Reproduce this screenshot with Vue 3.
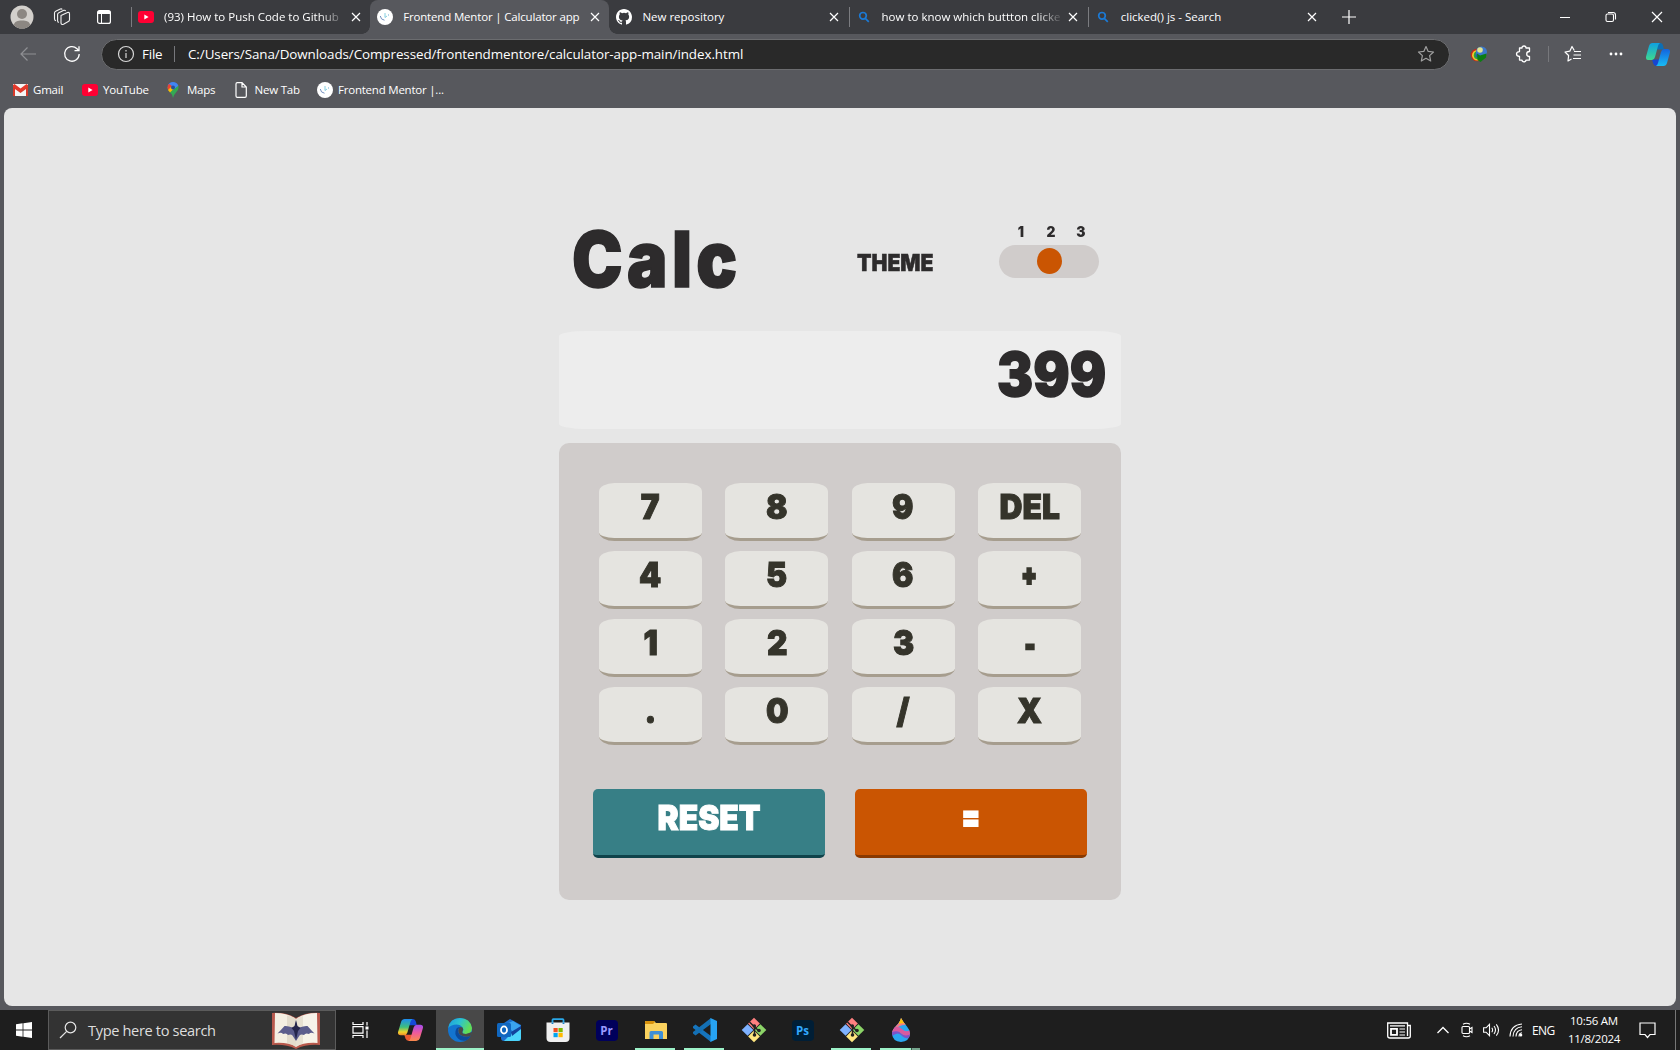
<script setup>
const tabs = [
  { icon: 'yt', title: '(93) How to Push Code to Github', fade: true },
  { icon: 'fm', title: 'Frontend Mentor | Calculator app', active: true },
  { icon: 'gh', title: 'New repository' },
  { icon: 'search', title: 'how to know which buttton clicke', fade: true },
  { icon: 'search', title: 'clicked() js - Search' },
]
const keys = ['7', '8', '9', 'DEL', '4', '5', '6', '+', '1', '2', '3', '-', '.', '0', '/', 'X']
</script>

<template>
  <div class="screen">
    <header class="tabbar">
      <div class="tabtools">
        <svg class="avatar" width="24" height="24" viewBox="0 0 24 24">
          <defs><clipPath id="av"><circle cx="12" cy="12" r="11.5" /></clipPath></defs>
          <g clip-path="url(#av)">
            <rect width="24" height="24" fill="#d3d0cc" />
            <circle cx="12" cy="9" r="5" fill="#8c8782" />
            <path d="M3.5 21c1-5 4-5.500 8.500-5.500s7.500.5 8.500 5.500v4h-17z" fill="#8c8782" />
          </g>
        </svg>
        <svg class="stack" width="18" height="18" viewBox="0 0 18 18" fill="none" stroke="#f2f2f2" stroke-width="1.1" stroke-linejoin="round">
          <path d="M8 7.500 14.500 4.500q1.800-.5 2 1.200v6q0 1.300-1.200 1.900l-4.800 2.600q-2.300.9-2.500-1.200z" />
          <path d="M5.800 14.500q-1.200-.5-1.200-1.800V6.600q0-1.300 1.200-1.900l5-2.400q1.400-.4 1.800.8" />
          <path d="M3 12.800q-1.500-.4-1.500-2V5.100q0-1.200 1.200-1.800L7.300 1q1.400-.5 1.900.6" />
        </svg>
        <svg class="vtabs" width="16" height="16" viewBox="0 0 16 16">
          <rect x="1.600" y="1.600" width="12.800" height="12.800" rx="2" fill="none" stroke="#fff" stroke-width="1.200" />
          <path d="M1.500 5V3.500q0-2 2-2h9q2 0 2 2V5z" fill="#fff" />
          <path d="M5.500 4v10" stroke="#fff" />
        </svg>
      </div>
      <div v-for="(t, i) in tabs" :key="i" class="tab" :class="{ active: t.active, bare: t.active || i === 2 }">
        <span class="ticon">
          <svg v-if="t.icon === 'yt'" width="16" height="12" viewBox="0 0 16 12"><rect width="16" height="12" rx="3" fill="#ff0033" /><path d="M6.300 3.500v5L10.600 6z" fill="#fff" /></svg>
          <svg v-else-if="t.icon === 'fm'" width="16" height="16" viewBox="0 0 16 16"><circle cx="8" cy="8" r="8" fill="#fff" /><path d="M3.300 7q.4 3.800 4.200 4.200" fill="none" stroke="#7590c0" /><path d="M8 4v4.500l2-1.500" fill="none" stroke="#86cfe0" /><path d="M11.500 5v2" stroke="#b5d6e8" /></svg>
          <svg v-else-if="t.icon === 'gh'" width="16" height="16" viewBox="0 0 16 16"><path fill="#fff" d="M8 0C3.580 0 0 3.580 0 8c0 3.540 2.290 6.530 5.470 7.590.4.070.55-.17.55-.38 0-.19-.01-.82-.01-1.490-2.010.37-2.530-.49-2.690-.94-.09-.23-.48-.94-.82-1.130-.28-.15-.68-.52-.01-.53.63-.01 1.080.58 1.230.82.72 1.210 1.870.87 2.330.66.07-.52.28-.87.51-1.070-1.780-.2-3.640-.89-3.640-3.950 0-.87.31-1.590.82-2.150-.08-.2-.36-1.020.08-2.120 0 0 .67-.21 2.200.82a7.600 7.600 0 0 1 4 0c1.530-1.040 2.200-.82 2.200-.82.44 1.100.16 1.920.08 2.120.51.56.82 1.270.82 2.150 0 3.070-1.870 3.750-3.650 3.950.29.25.54.73.54 1.480 0 1.070-.01 1.930-.01 2.200 0 .21.15.46.55.38A8 8 0 0 0 16 8c0-4.420-3.580-8-8-8z" /></svg>
          <svg v-else width="12" height="12" viewBox="0 0 12 12" fill="none" stroke="#1b7ad6" stroke-width="1.700"><circle cx="5" cy="4.800" r="3.300" /><path d="M7.300 7.300 10.800 10.800" /></svg>
        </span>
        <span class="ttext" :class="{ fade: t.fade }">{{ t.title }}</span>
        <svg class="x" width="10" height="10" viewBox="0 0 10 10" stroke="#fff" stroke-width="1.200"><path d="M1 1l8 8M9 1 1 9" /></svg>
      </div>
      <svg class="plus" width="14" height="14" viewBox="0 0 14 14" stroke="#fff" stroke-width="1.200"><path d="M7 0v14M0 7h14" /></svg>
      <div class="winctl">
        <svg width="46" height="34" viewBox="0 0 46 34"><path d="M18 17.500h10" stroke="#fff" /></svg>
        <svg width="46" height="34" viewBox="0 0 46 34" fill="none" stroke="#fff" stroke-width="1.100"><rect x="18" y="14" width="7.500" height="7.500" rx="1.500" /><path d="M20 12.500h5q2.500 0 2.500 2.500v4.500" /></svg>
        <svg width="46" height="34" viewBox="0 0 46 34" stroke="#fff" stroke-width="1.200"><path d="M18 12l10 10M28 12 18 22" /></svg>
      </div>
    </header>

    <div class="toolbar">
      <svg class="back" width="16" height="14" viewBox="0 0 16 14" fill="none" stroke="#8f9094" stroke-width="1.200"><path d="M16 7H1M7.500.5 1 7l6.500 6.500" /></svg>
      <svg class="reload" width="18" height="18" viewBox="0 0 18 18" fill="none" stroke="#fff" stroke-width="1.300"><path d="M16.200 9A7.300 7.300 0 1 1 14 3.700L15.800 5.500" /><path d="M16 1.200v4.500h-4.500" /></svg>
      <div class="address">
        <svg class="info" width="18" height="18" viewBox="0 0 18 18" fill="none" stroke="#d8d8d8" stroke-width="1.200"><circle cx="9" cy="9" r="7.500" /><path d="M9 8v5M9 5v1.500" /></svg>
        <span class="file">File</span>
        <i class="vline"></i>
        <span class="url">C:/Users/Sana/Downloads/Compressed/frontendmentore/calculator-app-main/index.html</span>
        <svg class="star" width="18" height="18" viewBox="0 0 18 18" fill="none" stroke="#a0a0a0" stroke-width="1.200" stroke-linejoin="round"><path d="M9 1.500l2.200 4.900 5.300.6-3.900 3.600 1.100 5.400L9 13.300 4.300 16l1.100-5.400L1.500 7l5.300-.6z" /></svg>
      </div>
      <svg class="idm" width="18" height="16" viewBox="0 0 18 16">
        <circle cx="7" cy="9" r="6.300" fill="#c42b18" /><circle cx="7.300" cy="9.200" r="5.300" fill="#f0c92c" /><circle cx="7.800" cy="9.300" r="4" fill="#2fa043" /><circle cx="8.500" cy="9" r="2.800" fill="#2456b8" />
        <circle cx="11.500" cy="6" r="5.500" fill="#3d78ca" /><circle cx="10" cy="4" r="2.800" fill="#e0e391" /><path d="M7 7.500l3 2 6.500-2-.5 4-5.500 4.500-3-2z" fill="#0c7d12" />
      </svg>
      <svg class="puzzle" width="16" height="18" viewBox="0 0 16 18" fill="none" stroke="#fff" stroke-width="1.300" stroke-linejoin="round"><path d="M4.500 3H7q0-2 2-2t2 2h3.500v3.500q-2.800 0-2.800 2.500t2.800 2.500v3.600H11q0 1.800-2 1.800t-2-1.800H4.500v-3.600Q1.500 11.200 1.500 9t3-2.400z" /></svg>
      <i class="vline t"></i>
      <svg class="favs" width="18" height="18" viewBox="0 0 18 18" fill="none" stroke="#fff" stroke-width="1.200" stroke-linejoin="round"><path d="M10.300 5.500 8 1.500 5.800 6.200 1 7l3.600 3.500L4 16l3.500-2" /><path d="M10 6.500h7M9.500 10h7.500M9 13.500h8" /></svg>
      <svg class="dots" width="14" height="4" viewBox="0 0 14 4" fill="#fff"><circle cx="2" cy="2" r="1.400" /><circle cx="7" cy="2" r="1.400" /><circle cx="12" cy="2" r="1.400" /></svg>
      <svg class="copilot" width="24" height="23" viewBox="0 0 24 23">
        <defs>
          <linearGradient id="c1" x1="0" y1="0" x2="0" y2="1"><stop offset="0" stop-color="#0fa0e0" /><stop offset="1" stop-color="#3fd98f" /></linearGradient>
          <linearGradient id="c2" x1="0" y1="1" x2="0" y2="0"><stop offset="0" stop-color="#18bcf5" /><stop offset="1" stop-color="#1463dd" /></linearGradient>
        </defs>
        <path d="M6 0h8.500q2 0 2.700 3l.8 3.500h-8z" fill="#0d6fb4" /><path d="M6 16.500h8.500L12 23h-1.500q-2.500 0-3.300-2.500z" fill="#1746d0" />
        <path d="M6.500 0H14q-1.500 1-2 3L9 14q-.8 3-3 3H2.500Q-.8 17 .2 13L3 3q.9-3 3.500-3z" fill="url(#c1)" />
        <path d="M18 6h3.500q3.300 0 2.300 4L21 20q-.9 3-3.500 3H10q1.500-1 2-3l3-11q.8-3 3-3z" fill="url(#c2)" />
      </svg>
    </div>

    <div class="bookmarks">
      <span class="bm b1"><svg width="15" height="12" viewBox="0 0 15 12"><path d="M0 0h15v12H0z" fill="#f5f5f5" /><path d="M0 12V1.500l7.500 5.500L15 1.500V12h-2V5L7.500 9 2 5v7z" fill="#d93a2b" /><path d="M0 1l1.500-1 6 4.500L13.500 0 15 1v1.500L7.500 8 0 2.500z" fill="#e5392c" /></svg>Gmail</span>
      <span class="bm b2"><svg width="16" height="12" viewBox="0 0 16 12"><rect width="16" height="12" rx="3" fill="#ff0033" /><path d="M6.300 3.500v5L10.600 6z" fill="#fff" /></svg>YouTube</span>
      <span class="bm b3"><svg width="12" height="16" viewBox="0 0 12 16"><path d="M6 16Q5.500 12.500 3 10.200 0 7 .4 5L6 5l5.300-1.500Q12.500 7 9 10.500 6.600 13 6 16z" fill="#34a853" /><path d="M.7 4Q2 0 6 0t5.300 3.700L6 8z" fill="#4285f4" /><path d="M2 1.700 5.500 4.500 1.500 8.500Q-.8 5 2 1.700z" fill="#ea4335" /><path d="M1 8l3.500-3.500L6.500 7 3 10.600z" fill="#fbbc04" /><circle cx="6" cy="5.500" r="2" fill="#24539c" /></svg>Maps</span>
      <span class="bm b4"><svg width="12" height="16" viewBox="0 0 12 16" fill="none" stroke="#fff" stroke-width="1.200"><path d="M1 2q0-1.300 1.300-1.300H7L11.300 5v9q0 1.300-1.300 1.300H2.300Q1 15.300 1 14zM7 .7V5h4.300" /></svg>New Tab</span>
      <span class="bm b5"><svg width="16" height="16" viewBox="0 0 16 16"><circle cx="8" cy="8" r="8" fill="#fff" /><path d="M3.300 7q.4 3.800 4.200 4.200" fill="none" stroke="#7590c0" /><path d="M8 4v4.500l2-1.500" fill="none" stroke="#86cfe0" /><path d="M11.500 5v2" stroke="#b5d6e8" /></svg>Frontend Mentor |...</span>
    </div>

    <main class="page">
      <div class="calc">
        <div class="head">
          <h1>Calc</h1>
          <span class="theme">THEME</span>
          <div class="switch">
            <div class="nums"><span>1</span><span>2</span><span>3</span></div>
            <div class="track"><i></i></div>
          </div>
        </div>
        <div class="display"><span>399</span></div>
        <div class="pad">
          <div class="keys">
            <button v-for="k in keys" :key="k"><span :class="{ op: k === '+' || k === '-', minus: k === '-' }">{{ k }}</span></button>
          </div>
          <div class="big">
            <button class="reset"><span>RESET</span></button>
            <button class="equal"><span>=</span></button>
          </div>
        </div>
      </div>
    </main>

    <footer class="taskbar">
      <div class="start"><svg width="16" height="16" viewBox="0 0 16 16" fill="#fff"><path d="M0 2.200 6.600 1.300v6.300H0zM7.400 1.200 16 0v7.600H7.400zM0 8.400h6.600v6.300L0 13.800zM7.400 8.400H16V16l-8.600-1.200z" /></svg></div>
      <div class="searchbox">
        <svg class="mag" width="18" height="18" viewBox="0 0 18 18" fill="none" stroke="#e6e6e6" stroke-width="1.200"><circle cx="11.500" cy="6.500" r="5.300" /><path d="M7.700 10.300 1 17" /></svg>
        <span>Type here to search</span>
        <svg class="book" width="48" height="37" viewBox="0 0 48 37">
          <path d="M0 1q14-1 24 5Q34 0 48 1v32q-14-1-24 4Q14 32 0 33z" fill="#b8594c" />
          <path d="M3 1q13 0 21 6v28Q16 30 2.500 31z" fill="#f4efe2" /><path d="M45 1q-13 0-21 6v28q8-5 21.500-4z" fill="#f7f3e8" />
          <path d="M24 7v28q-4-3-9-4V3.500q6 1.300 9 3.500z" fill="#cfc6b2" opacity=".45" /><path d="M24 7v28q4-3 7-3.500V4q-5 1.500-7 3z" fill="#cfc6b2" opacity=".4" />
          <path d="M24 9l1.200 6 2.300.5q5-2 8-1.500 3 3.500 7 7.500-4-1.500-5.500.5-3.500-1.500-5 1-3-1-4.500.5L24 29l-3.500-5.500q-1.500-1.500-4.500-.5-1.500-2.500-5-1-1.500-2-5.500-.5 4-4 7-7.500 3-.5 8 1.500l2.300-.5z" fill="#5c5d8c" />
          <path d="M24 8l1.500 6 3 2-2.500 3-2 9-2-9-2.500-3 3-2z" fill="#25264b" />
        </svg>
      </div>
      <div class="cell first"><svg width="17" height="16" viewBox="0 0 17 16" fill="none" stroke="#fff" stroke-width="1.200"><path d="M1 0v2.500h10V0M1 16v-2.500h10V16M1 4.700h10v6.500H1zM15 0v3.500M15 8.500V16" /><path d="M13.500 4.500h3v3h-3z" fill="#fff" stroke="none" /></svg></div>
      <div class="cell">
        <svg width="25" height="22" viewBox="0 0 24 23" preserveAspectRatio="none">
          <defs>
            <linearGradient id="k1" x1="0" y1="0" x2="0" y2="1"><stop offset="0" stop-color="#1d8df0" /><stop offset=".5" stop-color="#3fc07c" /><stop offset=".8" stop-color="#f2d32c" /><stop offset="1" stop-color="#f08a2a" /></linearGradient>
            <linearGradient id="k2" x1="0" y1="1" x2="0" y2="0"><stop offset="0" stop-color="#f98a4b" /><stop offset=".5" stop-color="#ee5a9c" /><stop offset="1" stop-color="#a44cf0" /></linearGradient>
          </defs>
          <path d="M6 0h8.500q2 0 2.700 3l.8 3.500h-8z" fill="#1649d8" /><path d="M6 16.500h8.500L12 23h-1.500q-2.500 0-3.300-2.500z" fill="#ec5a30" />
          <path d="M6.500 0H14q-1.500 1-2 3L9 14q-.8 3-3 3H2.500Q-.8 17 .2 13L3 3q.9-3 3.500-3z" fill="url(#k1)" />
          <path d="M18 6h3.500q3.300 0 2.300 4L21 20q-.9 3-3.500 3H10q1.500-1 2-3l3-11q.8-3 3-3z" fill="url(#k2)" />
        </svg>
      </div>
      <div class="cell on full">
        <svg width="24" height="24" viewBox="0 0 24 24">
          <defs><linearGradient id="e1" x1="0" y1="0" x2="1" y2=".4"><stop offset="0" stop-color="#1c9ae0" /><stop offset=".5" stop-color="#2cc3d0" /><stop offset="1" stop-color="#63de54" /></linearGradient></defs>
          <circle cx="12" cy="12" r="12" fill="#1374cf" />
          <path d="M.2 10Q2 0 12 0t12 10q0 6-6.500 6-3.500 0-3-2.500 1.500-2 0-4Q12.500 6.500 8.500 6.500 3 6.500.2 10z" fill="url(#e1)" />
          <path d="M8.500 10.500q-3 5.500 1.500 10 3 3 8 1.900Q21 21 22.800 17.800q-5 2-9.300 0Q9.500 16 10.200 11.500 10.800 9.800 12.500 9 10 8.500 8.500 10.500z" fill="#0b4a9c" />
          <path d="M12.500 9q-2.200 1.200-2.200 4 .5 4.200 5 5.300 4 .9 7.500-.5.500-.2 1-1.200l.2-2.600-6 2q-4.500 0-3.500-2.500 1.500-2.300 0-4z" fill="#484848" />
        </svg>
      </div>
      <div class="cell">
        <svg width="24" height="22" viewBox="0 0 24 22"><path d="M4 6 13 0l11 6v13q0 3-3 3H7q-3 0-3-3z" fill="#1c6fce" /><path d="M9 5l7-3 8 5-8 6z" fill="#3ba3ee" /><path d="M24 8v11q0 3-3 3H7l7-7z" fill="#4cd4fa" /><path d="M14 13l10-6v3l-9 7z" fill="#12439c" /><rect y="4" width="14" height="14" rx="1.500" fill="#1067c0" /><ellipse cx="7" cy="11" rx="3" ry="3.600" fill="none" stroke="#fff" stroke-width="1.800" /></svg>
      </div>
      <div class="cell">
        <svg width="24" height="24" viewBox="0 0 24 24"><path d="M6.500 6V2q0-.8.8-.8h9.400q.8 0 .8.800v4" fill="none" stroke="#2aa8e8" stroke-width="1.800" /><path d="M.5 4.500h23V20q0 4-4 4h-15q-4 0-4-4z" fill="#f0f0f0" /><path d="M6.500 6V4.500M17.500 6V4.500" stroke="#1b7fc4" stroke-width="1.800" /><path d="M7.500 10h4.200v4.200H7.500z" fill="#f25022" /><path d="M12.500 10h4.200v4.200h-4.200z" fill="#7fba00" /><path d="M7.500 15h4.200v4.200H7.500z" fill="#00a4ef" /><path d="M12.500 15h4.200v4.200h-4.200z" fill="#ffb900" /></svg>
      </div>
      <div class="cell"><span class="adobe pr">Pr</span></div>
      <div class="cell run">
        <svg width="22" height="18" viewBox="0 0 22 18"><path d="M0 1q0-1 1-1h8l2 2h10q1 0 1 1v15H0z" fill="#fbd25e" /><path d="M0 3V1q0-1 1-1h8l1 1-2 2z" fill="#d8920c" /><path d="M4.500 18v-6.500q0-1.500 1.500-1.500h10.500q1.500 0 1.500 1.500V18h-4v-4.500H8.500V18z" fill="#3f8fd6" /></svg>
      </div>
      <div class="cell run">
        <svg width="24" height="24" viewBox="0 0 24 24"><path d="M0 8.500 2.500 6.500 18 18v6L0 10z" fill="#1675bd" /><path d="M0 15.500l2.500 2L18 6V0L0 14z" fill="#1470b5" /><path d="M17.500 0 24 3v18l-6.500 3z" fill="#27a3f2" /></svg>
      </div>
      <div v-for="n in 3" :key="n" class="cell" :class="{ run: n === 3 }">
        <svg v-if="n !== 2" width="26" height="26" viewBox="0 0 26 26">
          <g transform="translate(13 13) rotate(45)">
            <rect x="-8.700" y="-8.700" width="8.300" height="8.300" fill="#ff8080" /><rect x=".4" y="-8.700" width="8.300" height="8.300" fill="#8cd468" /><rect x=".4" y=".4" width="8.300" height="8.300" fill="#ffe680" /><rect x="-8.700" y=".4" width="8.300" height="8.300" fill="#7fb2ff" />
          </g>
          <path d="M8.500 5 13.500 10v9M13.500 10l4.500 4" fill="none" stroke="#222" stroke-width="1.500" /><circle cx="13.300" cy="9" r="1.800" fill="#222" /><circle cx="18" cy="13.500" r="1.800" fill="#222" /><circle cx="13.500" cy="18" r="1.800" fill="#222" />
        </svg>
        <span v-else class="adobe ps">Ps</span>
      </div>
      <div class="cell run multi">
        <svg width="18" height="24" viewBox="0 0 18 24">
          <defs><clipPath id="dp"><path d="M9 0q2 4 6 8.500Q18 12 18 15.500 17.500 23.500 9 24 .5 23.500 0 15.500 0 12 4 8q4.500-4.500 5-8z" /></clipPath></defs>
          <g clip-path="url(#dp)"><rect width="18" height="24" fill="#2ba7f0" /><path d="M0 0h18v8Q10 4 0 14z" fill="#ef7c86" /><path d="M7 0h11v8Q13 4 7 6z" fill="#fbc40e" /><path d="M0 10q6-3 10 1t8 1v6q-5 1-9-2.500T0 16z" fill="#d95a9f" /><path d="M0 14q6-2 9 1.500t9 1v4q-6 0-9-3.500T0 18z" fill="#7b54c7" /></g>
        </svg>
      </div>
      <div class="tray">
        <svg class="news" width="24" height="17" viewBox="0 0 24 17" fill="none" stroke="#fff" stroke-width="1.300"><path d="M20.500 3.500h2.800V14q0 2-2 2H3Q.7 16 .7 14V1h19.800v13" /><path d="M4 6.800h6v6H4z" stroke-width="1.800" /><path d="M3 3.800h15M12.500 7H18M12.500 10H18M12.500 13H18" stroke-width="1.200" /></svg>
        <svg class="chev" width="12" height="8" viewBox="0 0 12 8" fill="none" stroke="#fff" stroke-width="1.300"><path d="M.5 7 6 1.500 11.500 7" /></svg>
        <svg class="cam" width="12" height="16" viewBox="0 0 12 16" fill="none" stroke="#fff" stroke-width="1.100"><rect x="1" y="4.500" width="7.500" height="7" rx="1" /><path d="M8.500 7 11 5.500v5L8.500 9M2 2.200q3.500-2 7 0M2 13.800q3.500 2 7 0" /></svg>
        <svg class="snd" width="17" height="14" viewBox="0 0 17 14" fill="none" stroke="#fff" stroke-width="1.100"><path d="M.6 4.800h2.500L6.500 1.300v11.400L3.100 9.200H.6zM8.800 4.800q1.600 2.200 0 4.400M11 3q3 4 0 8M13.300 1.300q4.500 5.700 0 11.400" /></svg>
        <svg class="wifi" width="14" height="14" viewBox="0 0 14 14" fill="none" stroke="#fff" stroke-width="1.100"><path d="M10 13.500q0-3.500 3-3.800M7 13.500q.3-6.300 6-6.800M4 13.500q.5-9 9-9.700M1 13.500Q1.500 2 13 1" /><circle cx="11.800" cy="12" r="1.500" fill="#fff" stroke="none" /></svg>
        <span class="eng">ENG</span>
        <span class="clock"><span class="time">10:56 AM</span><span class="date">11/8/2024</span></span>
        <svg class="note" width="17" height="17" viewBox="0 0 17 17" fill="none" stroke="#fff" stroke-width="1.200"><path d="M1 1h15v11.500h-5L8.500 15.500 6 12.500H1z" /></svg>
        <i class="edge"></i>
      </div>
    </footer>
  </div>
</template>

<style>
body { overflow: hidden; }
</style>

<style scoped>
* { box-sizing: border-box; }
svg { display: block; flex: none; }
.screen { width: 1680px; height: 1050px; display: flex; flex-direction: column; background: #57585d; font-family: "Open Sans", "Noto Sans", sans-serif; color: #fff; white-space: nowrap; overflow: hidden; }

.tabbar { height: 34px; display: flex; align-items: center; background: #3a3b3f; flex: none; }
.tabtools { width: 131px; display: flex; align-items: center; flex: none; }
.avatar { margin-left: 10px; }
.stack { margin-left: 19px; }
.vtabs { margin-left: 25px; }
.tab { width: 239.200px; height: 34px; display: flex; align-items: center; position: relative; flex: none; }
.tab::before { content: ""; position: absolute; left: 0; top: 7px; width: 1px; height: 20px; background: #7b7c80; }
.tab.bare::before { display: none; }
.tab.active { background: #57585d; border-radius: 8px 8px 0 0; }
.tab.active::after { content: ""; position: absolute; left: -8px; right: -8px; bottom: 0; height: 8px; background: radial-gradient(circle at 0 0, transparent 7.5px, #57585d 8px) left / 8px 8px no-repeat, radial-gradient(circle at 100% 0, transparent 7.5px, #57585d 8px) right / 8px 8px no-repeat; }
.ticon { width: 16px; margin-left: 7px; display: flex; justify-content: center; flex: none; }
.ttext { margin-left: 10px; width: 180px; font-size: 11.5px; line-height: 18px; letter-spacing: 0; }
.active .ttext { letter-spacing: -0.17px; }
.ttext.fade { -webkit-mask-image: linear-gradient(90deg, #000 155px, transparent 182px); mask-image: linear-gradient(90deg, #000 155px, transparent 182px); }
.x { margin-left: 6.500px; }
.plus { margin-left: 15px; }
.winctl { margin-left: auto; display: flex; }

.toolbar { height: 40px; display: flex; align-items: center; flex: none; }
.back { margin-left: 20px; }
.reload { margin-left: 27px; }
.address { margin-left: 20px; width: 1349px; height: 31px; border-radius: 16px; background: #292929; border: 1px solid #6b6c6f; display: flex; align-items: center; font-size: 13.4px; flex: none; }
.info { margin-left: 15px; }
.file { margin-left: 7px; width: 32px; letter-spacing: -0.2px; }
.vline { width: 1px; height: 16px; background: #77787c; flex: none; }
.url { margin-left: 13px; width: 1216px; letter-spacing: -0.07px; }
.star { margin-left: 13px; }
.idm { margin-left: 20px; }
.puzzle { margin-left: 27px; }
.vline.t { margin-left: 17px; }
.favs { margin-left: 15px; }
.dots { margin-left: 27px; }
.copilot { margin-left: 23px; }

.bookmarks { height: 34px; display: flex; align-items: center; font-size: 11.5px; letter-spacing: -0.22px; padding-bottom: 3px; flex: none; }
.bm { display: flex; align-items: center; gap: 5.500px; flex: none; }
.b1 { width: 69px; margin-left: 12.500px; }
.b2 { width: 85px; }
.b3 { width: 68px; gap: 8.500px; }
.b4 { width: 82px; gap: 8px; }

.page { height: 898px; margin: 0 4px; border-radius: 8px; background: #e6e6e6; flex: none; display: flex; justify-content: center; font-family: Inter, "Open Sans", sans-serif; font-weight: 900; color: #2d2b2c; }
.calc { width: 562px; margin-top: 114px; display: flex; flex-direction: column; }
.head { height: 109px; display: flex; }
h1 { margin: -11px 0 0 13px; width: 285px; font-size: 77px; line-height: 96px; letter-spacing: 5px; font-weight: 900; transform: scaleX(0.88); transform-origin: left; -webkit-text-stroke: 1.500px #2d2b2c; }
.theme { width: 142px; margin-top: 25px; font-size: 23.500px; line-height: 32px; transform: scaleX(0.9); transform-origin: left; -webkit-text-stroke: 0.5px #2d2b2c; }
.switch { width: 100px; }
.nums { display: flex; font-size: 15px; line-height: 19px; padding-left: 7px; }
.nums span { width: 30px; text-align: center; transform: scaleX(0.92); }
.track { width: 100px; height: 33px; margin-top: 4px; border-radius: 17px; background: #d0cccb; display: flex; align-items: center; justify-content: center; padding-bottom: 1px; }
.track i { width: 25px; height: 26px; border-radius: 50%; background: #ca5502; }
.display { height: 98px; border-radius: 5%; background: #ededed; display: flex; justify-content: flex-end; padding-right: 15px; font-size: 60px; line-height: 86px; }
.display span { transform: scaleX(0.9); transform-origin: right; -webkit-text-stroke: 1.500px #2d2b2c; }
.pad { margin-top: 14px; height: 457px; border-radius: 10px; background: #d0cccb; padding: 40px 34px 0; }
.keys { display: grid; grid-template-columns: repeat(4, 103px); grid-auto-rows: 58px; column-gap: 23.300px; row-gap: 9.900px; padding-left: 6px; }
button { font: inherit; border: 0; padding: 0; margin: 0; display: flex; justify-content: center; }
button span { transform: scaleX(0.92); -webkit-text-stroke: 1px currentColor; }
.keys button { background: #e5e4e0; border-radius: 15%; border-bottom: 3px solid #a69d8e; color: #35342b; font-size: 34.500px; line-height: 48px; }
.keys .op { transform: scaleX(0.76); -webkit-text-stroke-width: 2.500px; font-size: 29px; }
.keys .minus { padding-top: 2px; }
.big { display: flex; gap: 30px; margin-top: 44px; }
.big button { width: 232px; height: 69px; border-radius: 5px; color: #fff; font-size: 34.500px; line-height: 58px; }
.big .reset { background: #377f86; border-bottom: 3px solid #0f434b; }
.big .equal { background: #ca5502; border-bottom: 3px solid #893901; }
.big .equal span { line-height: 55px; transform: scaleX(0.76); -webkit-text-stroke-width: 2px; }

.taskbar { margin-top: 4px; height: 40px; display: flex; background: #1e1e1e; flex: none; }
.start { width: 48px; display: flex; align-items: center; justify-content: center; }
.searchbox { width: 288px; height: 40px; background: #333; border: 1px solid #5b5b5b; display: flex; align-items: center; color: #dedede; font-size: 14.600px; letter-spacing: -0.35px; }
.mag { margin-left: 10px; }
.searchbox span { margin-left: 11px; width: 184px; }
.cell { width: 49px; display: flex; align-items: center; justify-content: center; position: relative; }
.cell.first { width: 48px; padding: 0; }
.cell.first + .cell { width: 52px; }
.cell.on { width: 48px; background: #484848; }
.cell.run::after, .cell.on::after { content: ""; position: absolute; left: 4px; width: 40px; bottom: 0; height: 2px; background: #9df2c8; }
.cell.on::after { left: 0; width: 48px; }
.cell.multi::after { background: linear-gradient(90deg, #9df2c8 31px, #3c5247 31px, #3c5247 32px, #75a58d 32px); }
.adobe { width: 22px; height: 21px; border-radius: 4px; display: flex; align-items: center; justify-content: center; font-size: 11.500px; font-weight: 700; }
.pr { background: #00005b; color: #9999ff; }
.ps { background: #001e36; color: #31a8ff; }
.tray { margin-left: auto; display: flex; align-items: center; font-size: 12px; }
.chev { margin-left: 26px; }
.cam { margin-left: 12px; }
.snd { margin-left: 10px; }
.wifi { margin-left: 9px; }
.eng { margin-left: 9px; width: 30px; letter-spacing: -0.6px; font-size: 12px; }
.clock { width: 64px; display: flex; flex-direction: column; align-items: center; line-height: 18px; font-size: 11.500px; letter-spacing: -0.25px; }
.note { margin-left: 13px; }
.edge { width: 1px; height: 40px; background: #777; margin: 0 4px 0 19px; }
</style>
